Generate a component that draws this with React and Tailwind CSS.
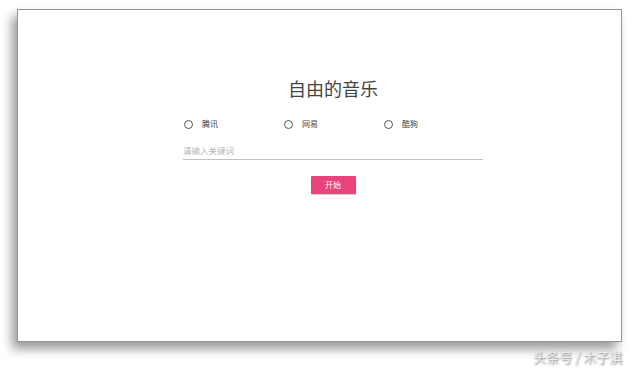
export default function App() {
  const font = { fontFamily: '"Noto Sans CJK SC", "Noto Sans", sans-serif' };
  const options = ["腾讯", "网易", "酷狗"];
  return (
    <div className="w-[640px] h-[370px] bg-white flex flex-col pl-[17px] pt-[9px]" style={font}>
      <div className="w-[605px] h-[333px] bg-white border border-[#8d979c] shadow-[-5px_7px_10px_rgba(0,0,0,0.4)] flex flex-col">
        <div className="ml-[165px] w-[300px] flex flex-col">
          <div className="mt-[66px] h-[24px] leading-[24px] text-[18px] font-normal text-[#444] text-center">自由的音乐</div>
          <div className="mt-[16px] h-[16px] flex">
            {options.map((o) => (
              <div key={o} className="w-[100px] flex items-center">
                <span className="ml-[1px] w-[9px] h-[9px] rounded-full border-[1.5px] border-[#555] box-border"></span>
                <span className="ml-[9px] text-[8px] leading-[16px] text-[#444]">{o}</span>
              </div>
            ))}
          </div>
          <div className="mt-[10px] h-[18px] flex items-center border-b border-[#c2c2c2] text-[8.5px] text-[#b5b5b5]">
            请输入关键词
          </div>
          <div className="mt-[16px] flex justify-center">
            <div className="w-[45px] h-[18px] bg-[#e8437c] rounded-[1px] shadow-[0_1px_1px_rgba(0,0,0,0.2)] flex items-center justify-center text-[8px] text-white">
              开始
            </div>
          </div>
        </div>
      </div>
      <div className="mt-[6px] w-[605px] flex justify-end">
        <span className="text-[13px] leading-[18px] text-[#ececec] [text-shadow:1px_1px_2px_#777]">头条号 / 木子淇</span>
      </div>
    </div>
  );
}
